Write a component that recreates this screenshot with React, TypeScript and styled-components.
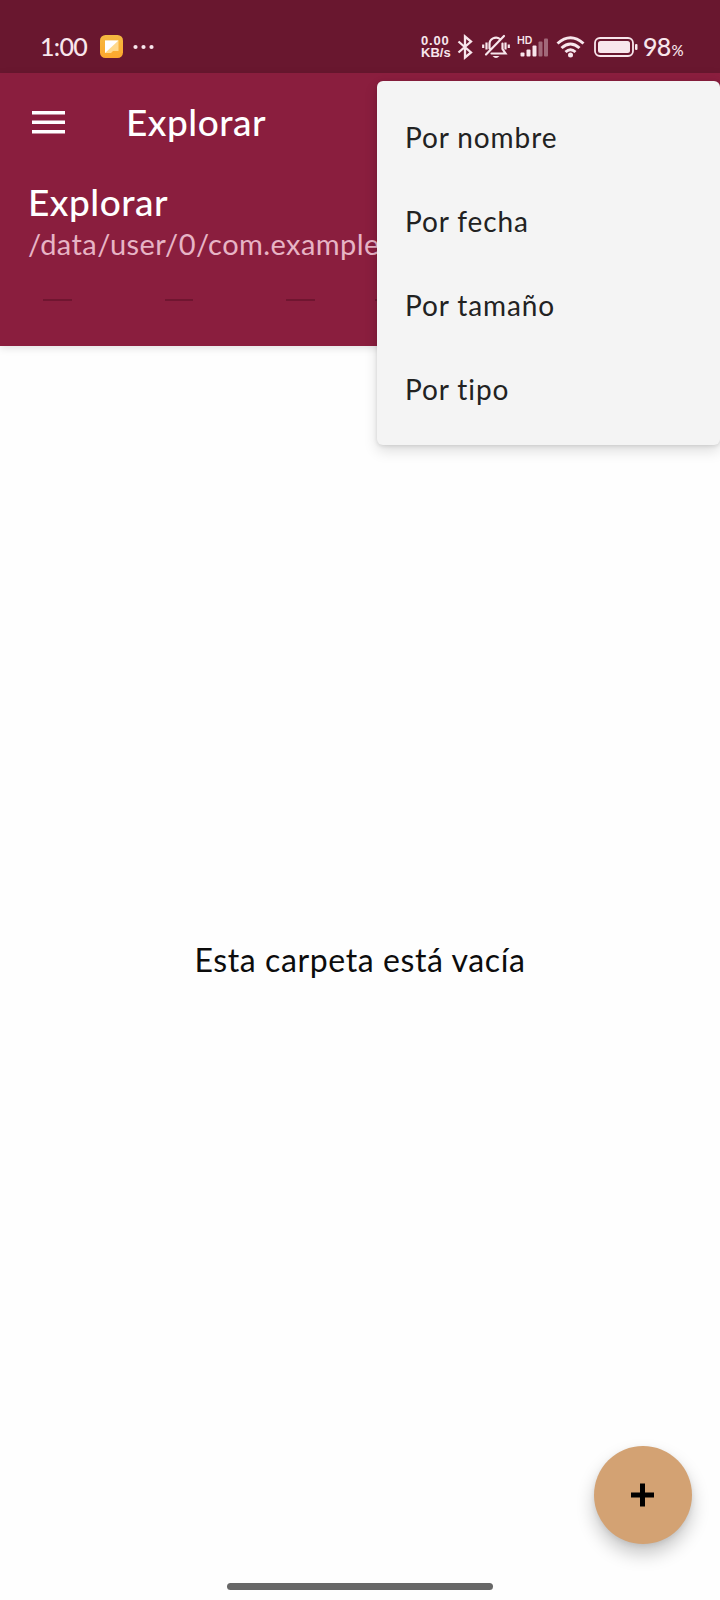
import React from 'react';
import styled, { createGlobalStyle } from 'styled-components';

const GlobalStyle = createGlobalStyle`
  * { box-sizing: border-box; }
  body { margin: 0; background: #fefefe; }
`;

const Screen = styled.div`
  position: relative;
  display: flex;
  flex-direction: column;
  width: 720px;
  height: 1600px;
  overflow: hidden;
  background: #fefefe;
  font-family: Lato, 'Noto Sans', sans-serif;
`;

const StatusBar = styled.div`
  display: flex;
  align-items: center;
  height: 73px;
  padding: 20px 36px 0 40px;
  background: #69172f;
  color: #f8e6ec;
  flex-shrink: 0;
`;

const Clock = styled.span`
  width: 60px;
  padding-bottom: 2px;
  font-size: 25px;
  font-weight: 500;
  line-height: 30px;
  letter-spacing: -0.7px;
`;

const StatusIcons = styled.div`
  display: flex;
  align-items: center;
  margin-left: auto;
`;

const Speed = styled.div`
  display: flex;
  flex-direction: column;
  width: 36px;
  font: 700 13px/12px 'Liberation Sans', sans-serif;
  white-space: nowrap;
`;

const SpeedValue = styled.span`
  letter-spacing: 0.8px;
`;

const Glyph = styled.svg<{ $gap?: number }>`
  display: block;
  flex-shrink: 0;
  margin-right: ${(p) => p.$gap ?? 0}px;
`;

const Battery = styled.span`
  width: 41px;
  padding-top: 3px;
  white-space: nowrap;
  font-size: 25px;
  font-weight: 500;
  line-height: 30px;
  letter-spacing: -0.7px;
`;

const Percent = styled.small`
  margin-left: 1px;
  font-size: 15px;
`;

const Header = styled.header`
  height: 273px;
  flex-shrink: 0;
  background: #8a1e3e;
  box-shadow: 0 2px 8px rgba(0, 0, 0, 0.12);
  color: #fff;
`;

const Toolbar = styled.div`
  display: flex;
  align-items: center;
  height: 98px;
  padding-left: 32px;
`;

const Title = styled.h1`
  margin: 0;
  font-size: 37px;
  font-weight: 500;
  line-height: 44px;
  letter-spacing: 0.5px;
`;

const Location = styled.div`
  padding: 9px 0 0 28px;
`;

const Path = styled.div`
  color: #e7b4c5;
  font-size: 29px;
  line-height: 40px;
  letter-spacing: 0.43px;
  white-space: nowrap;
`;

const Actions = styled.div`
  display: flex;
  gap: 93px;
  padding: 35px 0 0 43px;
`;

const Dash = styled.i`
  width: 28.5px;
  height: 2px;
  background: #701530;
  &:last-child { margin-left: -33px; }
`;

const Content = styled.main`
  display: flex;
  flex: 1;
  align-items: center;
  justify-content: center;
  padding-bottom: 9px;
`;

const EmptyText = styled.p`
  margin: 0;
  color: #0c0c0c;
  font-size: 32px;
  line-height: 40px;
  letter-spacing: 0.6px;
`;

const Menu = styled.ul`
  position: absolute;
  top: 81px;
  right: 0;
  width: 343px;
  margin: 0;
  padding: 14px 0;
  list-style: none;
  border-radius: 6px;
  background: #f4f4f4;
  box-shadow: 0 6px 14px rgba(0, 0, 0, 0.13), 0 1px 4px rgba(0, 0, 0, 0.12);
`;

const MenuItem = styled.li`
  height: 84px;
  padding-left: 28px;
  color: #222;
  font-size: 28px;
  line-height: 84px;
  letter-spacing: 0.9px;
`;

const Fab = styled.button`
  position: absolute;
  right: 28px;
  bottom: 56px;
  display: grid;
  place-items: center;
  width: 98px;
  height: 98px;
  padding: 0;
  border: 0;
  border-radius: 50%;
  background: #d3a273;
  box-shadow: 0 10px 18px rgba(0, 0, 0, 0.22), 0 2px 5px rgba(0, 0, 0, 0.08);
`;

const HomeBar = styled.div`
  align-self: center;
  width: 266px;
  height: 7px;
  margin-bottom: 10px;
  border-radius: 4px;
  background: #676767;
`;

const options = ['Por nombre', 'Por fecha', 'Por tamaño', 'Por tipo'];

export default function App() {
  return (
    <Screen>
      <GlobalStyle />
      <StatusBar>
        <Clock>1:00</Clock>
        <Glyph width="23" height="23" viewBox="0 0 23 23" $gap={10}>
          <defs>
            <linearGradient id="note" x1="0" y1="0" x2="0" y2="1">
              <stop offset="0" stopColor="#f5b942" />
              <stop offset="1" stopColor="#fda72c" />
            </linearGradient>
          </defs>
          <rect width="23" height="23" rx="5.5" fill="url(#note)" />
          <path d="M5 5.500h13.500v10.500H13L11 18H5z" fill="#ffd98c" />
          <path d="M5 5.500h13.500L5 18z" fill="#fff" />
        </Glyph>
        <Glyph width="22" height="6" viewBox="0 0 22 6" fill="#f8e6ec">
          <circle cx="2.500" cy="3" r="2.100" />
          <circle cx="10.500" cy="3" r="2.100" />
          <circle cx="18.500" cy="3" r="2.100" />
        </Glyph>
        <StatusIcons>
          <Speed><SpeedValue>0.00</SpeedValue><span>KB/s</span></Speed>
          <Glyph width="17" height="26" viewBox="0 0 17 26" fill="none" stroke="#f8e6ec" strokeWidth="2.300" $gap={8}>
            <path d="M1.500 7.500L14 18.500L8 23.500V2.500L14 7.500L1.500 18.500" />
          </Glyph>
          <Glyph width="28" height="26" viewBox="0 0 28 26" fill="none" stroke="#f8e6ec" strokeWidth="2.200" $gap={7}>
            <path d="M7.500 14.500V10.500a6.500 6.500 0 0 1 10.500-5.500M20.500 9.500v5.500l3 4.500H9.500M4 20.500L22 2" strokeLinecap="round" />
            <path d="M4.500 8.500v7M1.200 10.500v3.500M23.500 8.500v7M26.800 10.500v3.500" />
            <path d="M10.500 22h7q-3.500 4-7 0z" fill="#f8e6ec" stroke="none" />
          </Glyph>
          <Glyph width="32" height="24" viewBox="0 0 32 24" $gap={7}>
            <text x="0" y="9" fill="#f8e6ec" fontFamily="Inter, sans-serif" fontSize="10.500" fontWeight="600">HD</text>
            <g fill="#f8e6ec">
              <rect x="3.500" y="17.500" width="4" height="4" rx="1" />
              <rect x="9.500" y="14.500" width="4" height="7" rx="1" />
              <rect x="15.500" y="10.500" width="4" height="11" rx="1" />
              <rect x="21.500" y="6.500" width="4" height="15" rx="1" opacity=".4" />
              <rect x="27" y="3.500" width="4" height="18" rx="1" opacity=".4" />
            </g>
          </Glyph>
          <Glyph width="29" height="22" viewBox="0 0 29 22" fill="none" stroke="#f8e6ec" strokeWidth="3" $gap={9}>
            <path d="M1.500 7.500Q14.500-4 27.500 7.500M5.500 12Q14.500 4 23.500 12M9.500 16Q14.500 11.500 19.500 16" />
            <circle cx="14.500" cy="19" r="2.500" fill="#f8e6ec" stroke="none" />
          </Glyph>
          <Glyph width="44" height="20" viewBox="0 0 44 20" $gap={5}>
            <rect x="1" y="1" width="38" height="18" rx="5" fill="none" stroke="#f8e6ec" strokeWidth="1.800" />
            <rect x="4" y="4" width="32" height="12" rx="2.500" fill="#f8e6ec" />
            <rect x="41" y="7" width="2.500" height="6" rx="1" fill="#f8e6ec" />
          </Glyph>
          <Battery>98<Percent>%</Percent></Battery>
        </StatusIcons>
      </StatusBar>
      <Header>
        <Toolbar>
          <Glyph width="33" height="23" viewBox="0 0 33 23" fill="#fff" $gap={61}>
            <path d="M0 0h33v3.500H0zM0 9.500h33V13H0zM0 19h33v3.500H0z" />
          </Glyph>
          <Title>Explorar</Title>
        </Toolbar>
        <Location>
          <Title as="h2">Explorar</Title>
          <Path>/data/user/0/com.example</Path>
        </Location>
        <Actions><Dash /><Dash /><Dash /><Dash /></Actions>
      </Header>
      <Content><EmptyText>Esta carpeta está vacía</EmptyText></Content>
      <HomeBar />
      <Menu>{options.map((o) => <MenuItem key={o}>{o}</MenuItem>)}</Menu>
      <Fab aria-label="Agregar">
        <svg width="24" height="24" viewBox="0 0 24 24"><path d="M9 .5h5v9h9v5h-9v9H9v-9H0v-5h9z" /></svg>
      </Fab>
    </Screen>
  );
}
